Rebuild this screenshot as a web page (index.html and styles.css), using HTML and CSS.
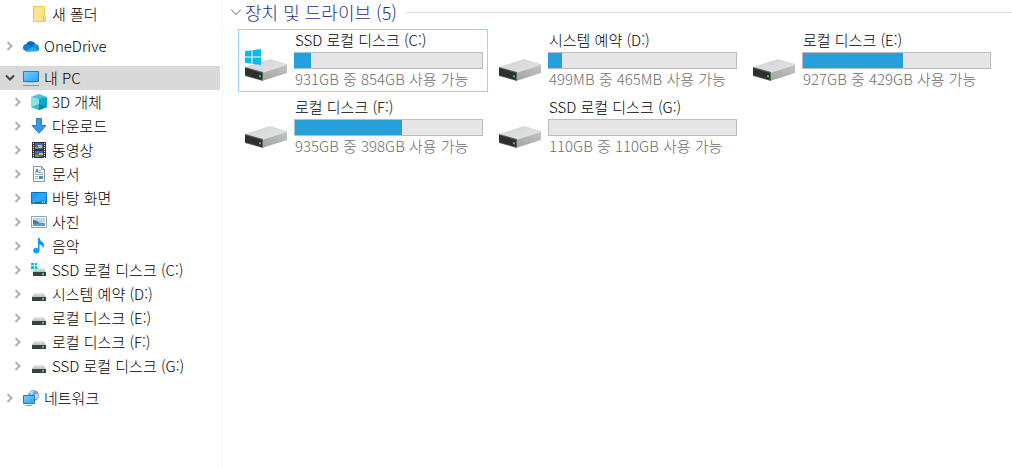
FILE: index.html
```html
<!DOCTYPE html>
<html lang="ko">
<head>
    <meta charset="UTF-8">
    <meta name="viewport" content="width=device-width, initial-scale=1.0">
    <title>내 PC</title>
    <link rel="stylesheet" href="styles.css">
</head>
<body>
    <!-- shared icons -->
    <svg class="sprite" width="0" height="0" aria-hidden="true">
        <defs>
            <linearGradient id="screen" x1="0" y1="0" x2="1" y2="1">
                <stop offset="0" stop-color="#7fd0ff"/>
                <stop offset="1" stop-color="#1fa4f6"/>
            </linearGradient>
            <linearGradient id="top" x1="0" y1="0" x2="1" y2="1">
                <stop offset="0" stop-color="#d2d3d5"/>
                <stop offset="1" stop-color="#e4e5e8"/>
            </linearGradient>
            <linearGradient id="side" x1="0" y1="1" x2="1" y2="0">
                <stop offset="0" stop-color="#a2a3a5"/>
                <stop offset="1" stop-color="#c2c3c5"/>
            </linearGradient>
            <linearGradient id="small-top" x1="0" y1="0" x2="0" y2="1">
                <stop offset="0" stop-color="#e6e7e9"/>
                <stop offset="1" stop-color="#b9bcc0"/>
            </linearGradient>
        </defs>
        <symbol id="chevron" viewBox="0 0 10 10">
            <path d="M2.500 1l4 4-4 4" fill="none" stroke="currentColor" stroke-width="2"/>
        </symbol>
        <symbol id="folder" viewBox="0 0 16 16">
            <path d="M2.500.5h11v9l1 1v5h-12z" fill="#ffe48f" stroke="#efc94f"/>
            <path d="M12.500 15V10l1-1" fill="none" stroke="#e7bd3f"/>
        </symbol>
        <symbol id="cloud" viewBox="0 0 16 16">
            <path d="M3 8a5 5 0 0 1 9.500-2L9 11z" fill="#0a64bc"/>
            <path d="M1 12a3.500 3.500 0 0 1 3-6l6 3-3 4.500H3.500z" fill="#0f7fd6"/>
            <path d="M10 7a3.600 3.600 0 0 1 6 3 3 3 0 0 1-1 3L9 10z" fill="#1490df"/>
            <path d="M2 13l8-4 5.500 3.500q-1 1-2 1h-10q-1 0-1.500-.5z" fill="#28a8ea"/>
        </symbol>
        <symbol id="pc" viewBox="0 0 16 16">
            <path d="M.5 1.500h15v10H.5z" fill="url(#screen)" stroke="#2f7ba8"/>
            <path d="M4 12.500h8" stroke="#b6c4ce"/>
            <path d="M0 15.500h16" stroke="#7d99ac"/>
        </symbol>
        <symbol id="cube" viewBox="0 0 16 16">
            <path d="M8 0l8 3-8 3-8-3z" fill="#49c3d3"/>
            <path d="M0 3l8 2v11l-8-3z" fill="#8fe3e8"/>
            <path d="M8 5l8-2v10l-8 3z" fill="#08a8c6"/>
            <path d="M0 13l8-3v6z" fill="#35bccd"/>
            <path d="M8 10l8 3-8 3z" fill="#0589a6"/>
        </symbol>
        <symbol id="download" viewBox="0 0 16 16">
            <path d="M5.500.5h5v7h4.500L8 15.300 1 7.500h4.500z" fill="#3b96e8" stroke="#2a7fca"/>
        </symbol>
        <symbol id="video" viewBox="0 0 16 16">
            <path d="M1 0h14v16H1z" fill="#333"/>
            <path d="M4 1h8v6H4zM4 9h8v6H4z" fill="#4169bb"/>
            <path d="M7 3h4v3H7zM8 11h4v2H8z" fill="#e9b928"/>
            <path d="M4 5h3v2H4zM4 13h4v2H4z" fill="#6f9b4c"/>
            <path d="M2.500 1v15M13.500 1v15" stroke="#fff" stroke-dasharray="1 1"/>
        </symbol>
        <symbol id="document" viewBox="0 0 16 16">
            <path d="M2.500.5h8l3 3v12h-11z" fill="#fff" stroke="#929292"/>
            <path d="M10.500.5v3h3" fill="none" stroke="#929292"/>
            <path d="M8 4.500h2M8 6.500h4M4 8.500h8M4 10.500h3M4 12.500h3" stroke="#8fb3cb"/>
            <path d="M4.500 7l1.500-4 1.500 4M5 5.500h2" fill="none" stroke="#2d8bce"/>
            <path d="M8 10h4v3H8z" fill="#4292c1"/>
        </symbol>
        <symbol id="desktop" viewBox="0 0 16 16">
            <path d="M.5 2.500h15v11H.5z" fill="#1a9fff" stroke="#0872b9"/>
            <path d="M10 3h5v3L7 12H1z" fill="#2ba8ff"/>
            <path d="M1 12.500h14" stroke="#066bad"/>
            <path d="M2 12.500h1M11 12.500h1M13 12.500h1" stroke="#fff"/>
        </symbol>
        <symbol id="picture" viewBox="0 0 16 16">
            <path d="M.5 2.500h15v11H.5z" fill="#fff" stroke="#a0a0a0"/>
            <path d="M2 4h12v4H2z" fill="#b4dcf8"/>
            <path d="M2 6q4 0 6 2.500l6 .5v3H2z" fill="#407487"/>
            <path d="M2 9.500l12-.5v3H2z" fill="#5d9dcc"/>
        </symbol>
        <symbol id="music" viewBox="0 0 16 16">
            <path d="M7 0h1.500q.5 3 3.500 4.500 2 2 0 6-.3-3.500-3.500-4V13a3.200 2.700 0 1 1-1.500-2.600z" fill="#0a9cf5"/>
        </symbol>
        <symbol id="drive-small" viewBox="0 0 16 16">
            <path d="M3 7h10l2 4H1z" fill="url(#small-top)"/>
            <path d="M1 11h14v4H1z" fill="#3d4043"/>
            <path d="M11 12h2v2h-2z" fill="#2fe23b"/>
        </symbol>
        <symbol id="system-small" viewBox="0 0 16 16">
            <path d="M3 6h10l2 4H2z" fill="url(#small-top)"/>
            <path d="M2 10h13v4H2z" fill="#3d4043"/>
            <path d="M11 11h2v2h-2z" fill="#2fe23b"/>
            <path d="M0 1h3v2H0zM4 1h2v2H4zM0 4h3v3H0zM4 4h2v3H4z" fill="#00bcf2"/>
        </symbol>
        <symbol id="network" viewBox="0 0 16 16">
            <circle cx="10.500" cy="5.500" r="5.500" fill="#6da9c8"/>
            <path d="M6 3q3-3 5-2L9 5zM12 4l3 0v4l-3 1z" fill="#bcdcea"/>
            <path d="M.5 5.500h11v8H.5z" fill="url(#screen)" stroke="#2f7ba8"/>
            <path d="M3 15.500h6" stroke="#8aa3b3"/>
        </symbol>
        <symbol id="drive" viewBox="0 0 44 36">
            <path d="M1 19L26 11l17 5v2L19 25z" fill="url(#top)"/>
            <path d="M18 25l25-8v8L18 33z" fill="url(#side)"/>
            <path d="M1 19l18 5v9L1 28z" fill="#5d5f60"/>
            <path d="M1 20l17 5v7L1 27z" fill="#2c2e2f"/>
            <path d="M15 27l2 .5v2l-2-.5z" fill="#2fd43a"/>
        </symbol>
        <symbol id="windows" viewBox="0 0 16 16">
            <path d="M0 2.300L6.500 1.300V7.500H0zM7.500 1.200L16 0v7.500H7.500zM0 8.500h6.500v6.200L0 13.700zM7.500 8.500H16V16l-8.500-1.200z" fill="#00bcf2"/>
        </symbol>
    </svg>

    <div class="explorer">
        <nav class="sidebar" aria-label="탐색 창">
            <ul class="tree">
                <li class="node child">
                    <span class="toggle"></span>
                    <a href="#"><svg class="icon"><use href="#folder"/></svg>새 폴더</a>
                </li>
            </ul>
            <ul class="tree">
                <li class="node">
                    <button class="toggle" aria-label="펼치기"><svg><use href="#chevron"/></svg></button>
                    <a href="#"><svg class="icon"><use href="#cloud"/></svg>OneDrive</a>
                </li>
            </ul>
            <ul class="tree">
                <li class="node selected">
                    <button class="toggle open" aria-label="접기"><svg><use href="#chevron"/></svg></button>
                    <a href="#"><svg class="icon"><use href="#pc"/></svg>내 PC</a>
                </li>
                <li class="node child">
                    <button class="toggle" aria-label="펼치기"><svg><use href="#chevron"/></svg></button>
                    <a href="#"><svg class="icon"><use href="#cube"/></svg>3D 개체</a>
                </li>
                <li class="node child">
                    <button class="toggle" aria-label="펼치기"><svg><use href="#chevron"/></svg></button>
                    <a href="#"><svg class="icon"><use href="#download"/></svg>다운로드</a>
                </li>
                <li class="node child">
                    <button class="toggle" aria-label="펼치기"><svg><use href="#chevron"/></svg></button>
                    <a href="#"><svg class="icon"><use href="#video"/></svg>동영상</a>
                </li>
                <li class="node child">
                    <button class="toggle" aria-label="펼치기"><svg><use href="#chevron"/></svg></button>
                    <a href="#"><svg class="icon"><use href="#document"/></svg>문서</a>
                </li>
                <li class="node child">
                    <button class="toggle" aria-label="펼치기"><svg><use href="#chevron"/></svg></button>
                    <a href="#"><svg class="icon"><use href="#desktop"/></svg>바탕 화면</a>
                </li>
                <li class="node child">
                    <button class="toggle" aria-label="펼치기"><svg><use href="#chevron"/></svg></button>
                    <a href="#"><svg class="icon"><use href="#picture"/></svg>사진</a>
                </li>
                <li class="node child">
                    <button class="toggle" aria-label="펼치기"><svg><use href="#chevron"/></svg></button>
                    <a href="#"><svg class="icon"><use href="#music"/></svg>음악</a>
                </li>
                <li class="node child">
                    <button class="toggle" aria-label="펼치기"><svg><use href="#chevron"/></svg></button>
                    <a href="#"><svg class="icon"><use href="#system-small"/></svg>SSD 로컬 디스크 (C:)</a>
                </li>
                <li class="node child">
                    <button class="toggle" aria-label="펼치기"><svg><use href="#chevron"/></svg></button>
                    <a href="#"><svg class="icon"><use href="#drive-small"/></svg>시스템 예약 (D:)</a>
                </li>
                <li class="node child">
                    <button class="toggle" aria-label="펼치기"><svg><use href="#chevron"/></svg></button>
                    <a href="#"><svg class="icon"><use href="#drive-small"/></svg>로컬 디스크 (E:)</a>
                </li>
                <li class="node child">
                    <button class="toggle" aria-label="펼치기"><svg><use href="#chevron"/></svg></button>
                    <a href="#"><svg class="icon"><use href="#drive-small"/></svg>로컬 디스크 (F:)</a>
                </li>
                <li class="node child">
                    <button class="toggle" aria-label="펼치기"><svg><use href="#chevron"/></svg></button>
                    <a href="#"><svg class="icon"><use href="#drive-small"/></svg>SSD 로컬 디스크 (G:)</a>
                </li>
            </ul>
            <ul class="tree">
                <li class="node">
                    <button class="toggle" aria-label="펼치기"><svg><use href="#chevron"/></svg></button>
                    <a href="#"><svg class="icon"><use href="#network"/></svg>네트워크</a>
                </li>
            </ul>
        </nav>

        <main class="content">
            <div class="group-header">
                <button class="group-toggle" aria-label="접기">
                    <svg viewBox="0 0 12 12"><path d="M1 3.500l5 5 5-5" fill="none" stroke="#666"/></svg>
                </button>
                <h2>장치 및 드라이브 (5)</h2>
            </div>
            <div class="drives">
                <a href="#" class="drive active">
                    <span class="drive-icon">
                        <svg class="disk"><use href="#drive"/></svg>
                        <svg class="logo"><use href="#windows"/></svg>
                    </span>
                    <span class="info">
                        <span class="name">SSD 로컬 디스크 (C:)</span>
                        <span class="bar low"><span class="used" style="width: 8.3%"></span></span>
                        <span class="size">931GB 중 854GB 사용 가능</span>
                    </span>
                </a>
                <a href="#" class="drive">
                    <span class="drive-icon"><svg class="disk"><use href="#drive"/></svg></span>
                    <span class="info">
                        <span class="name">시스템 예약 (D:)</span>
                        <span class="bar low"><span class="used" style="width: 6.8%"></span></span>
                        <span class="size">499MB 중 465MB 사용 가능</span>
                    </span>
                </a>
                <a href="#" class="drive">
                    <span class="drive-icon"><svg class="disk"><use href="#drive"/></svg></span>
                    <span class="info">
                        <span class="name">로컬 디스크 (E:)</span>
                        <span class="bar"><span class="used" style="width: 53.7%"></span></span>
                        <span class="size">927GB 중 429GB 사용 가능</span>
                    </span>
                </a>
                <a href="#" class="drive">
                    <span class="drive-icon"><svg class="disk"><use href="#drive"/></svg></span>
                    <span class="info">
                        <span class="name">로컬 디스크 (F:)</span>
                        <span class="bar"><span class="used" style="width: 57%"></span></span>
                        <span class="size">935GB 중 398GB 사용 가능</span>
                    </span>
                </a>
                <a href="#" class="drive">
                    <span class="drive-icon"><svg class="disk"><use href="#drive"/></svg></span>
                    <span class="info">
                        <span class="name">SSD 로컬 디스크 (G:)</span>
                        <span class="bar"><span class="used" style="width: 0%"></span></span>
                        <span class="size">110GB 중 110GB 사용 가능</span>
                    </span>
                </a>
            </div>
        </main>
    </div>
</body>
</html>
```

FILE: styles.css
```css
* {
    box-sizing: border-box;
}
body {
    margin: 0;
    background-color: #fff;
    color: #000;
    font-family: "Noto Sans CJK KR", sans-serif;
    font-size: 15px;
    font-weight: 300;
    line-height: 22px;
}
a {
    color: inherit;
    text-decoration: none;
}
button {
    border: none;
    background: none;
    padding: 0;
    cursor: pointer;
}
.sprite {
    position: absolute;
}
.explorer {
    display: flex;
    min-height: 100vh;
}

/* navigation pane */
.sidebar {
    width: 223px;
    flex-shrink: 0;
    display: flex;
    flex-direction: column;
    gap: 8px;
    padding: 2px 2px 0 0;
    border-right: 1px solid #f5f5f5;
}
.tree {
    list-style: none;
    margin: 0;
    padding: 0;
}
.node {
    display: flex;
    align-items: center;
    height: 24px;
    padding-left: 4px;
}
.node.child {
    padding-left: 12px;
}
.node.selected {
    background-color: #d9d9d9;
}
.node a {
    display: flex;
    align-items: center;
    gap: 5px;
    flex: 1;
    white-space: nowrap;
}
.toggle {
    width: 12px;
    height: 12px;
    margin-right: 7px;
    display: flex;
    align-items: center;
    justify-content: center;
    color: #b0b0b0;
}
.toggle svg {
    width: 10px;
    height: 10px;
}
.toggle.open {
    color: #444;
    transform: rotate(90deg);
}
.icon {
    width: 16px;
    height: 16px;
}

/* drives */
.content {
    flex: 1;
    min-width: 0;
}
.group-header {
    display: flex;
    align-items: center;
    padding-left: 7px;
    height: 24px;
}
.group-header::after {
    content: "";
    flex: 1;
    height: 1px;
    margin-left: 8px;
    background-color: #e2e2e2;
}
.group-header h2 {
    margin: 0;
    font-size: 18px;
    font-weight: 300;
    color: #1e3287;
}
.group-toggle {
    width: 12px;
    height: 12px;
    margin-right: 3px;
}
.group-toggle svg {
    display: block;
}
.drives {
    display: grid;
    grid-template-columns: repeat(auto-fill, 250px);
    gap: 4px;
    padding: 5px 0 0 15px;
}
.drive {
    display: flex;
    gap: 6px;
    padding: 0 4px 0 5px;
    height: 63px;
    border: 1px solid transparent;
}
.drive.active {
    border-color: #99d1ff;
}
.drive-icon {
    position: relative;
    width: 44px;
    padding-top: 18px;
}
.disk {
    display: block;
    width: 44px;
    height: 36px;
}
.logo {
    position: absolute;
    left: 1px;
    top: 19px;
    width: 16px;
    height: 16px;
}
.info {
    flex: 1;
    display: flex;
    flex-direction: column;
}
.name,
.size {
    padding-left: 1px;
    line-height: 20px;
    white-space: nowrap;
}
.size {
    color: #6d6d6d;
}
.bar {
    height: 17px;
    margin-top: 2px;
    border: 1px solid #bcbcbc;
    background-color: #e6e6e6;
}
.bar.low {
    border-left-color: #26a0da;
}
.used {
    display: block;
    height: 100%;
    background-color: #26a0da;
}
```
